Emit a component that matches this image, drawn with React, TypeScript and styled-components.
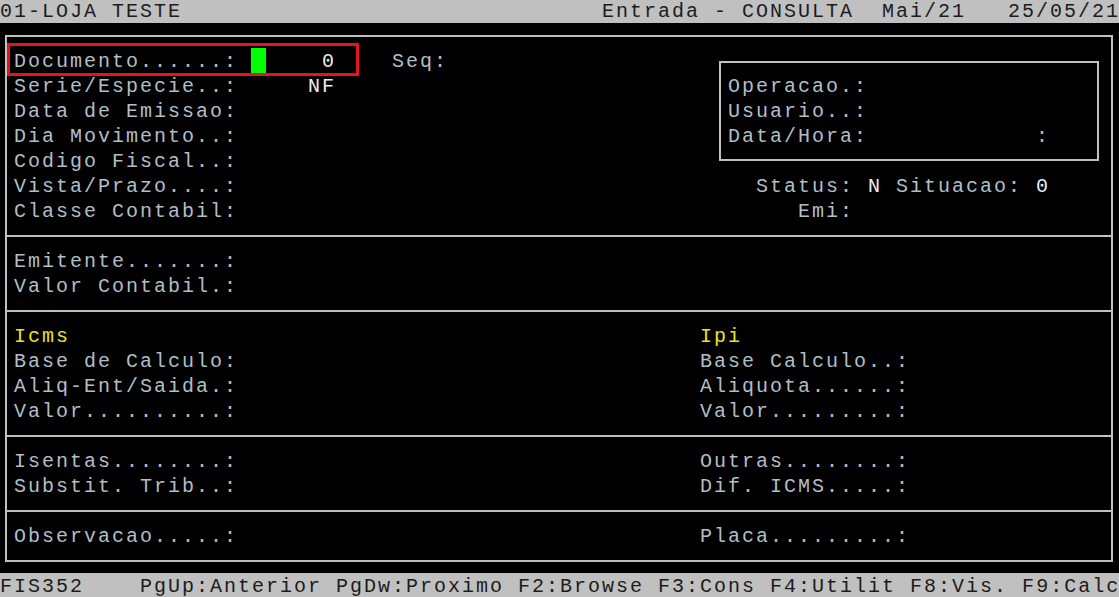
import React from "react";
import styled, { createGlobalStyle } from "styled-components";

const GlobalStyle = createGlobalStyle`
  html, body {
    margin: 0;
    padding: 0;
    background: #000;
    overflow: hidden;
  }
`;

const CELL_W = 14;
const CELL_H = 25;

const Screen = styled.div`
  position: relative;
  display: grid;
  grid-template-columns: repeat(80, ${CELL_W}px);
  grid-template-rows: repeat(24, ${CELL_H}px);
  width: ${CELL_W * 80}px;
  margin-top: -2px;
  background: #000;
  font-family: "Liberation Mono", "DejaVu Sans Mono", monospace;
  font-size: 20px;
  letter-spacing: 2px;
  line-height: ${CELL_H}px;
`;

const StatusBar = styled.div<{ $row: number }>`
  grid-column: 1 / 81;
  grid-row: ${(p) => p.$row + 1};
  background: #c0c0c0;
`;

type Tone = "label" | "value" | "title" | "bar";

const toneColor: Record<Tone, string> = {
  label: "#b2bec6",
  value: "#ececec",
  title: "#ece028",
  bar: "#1c1c1c",
};

const Text = styled.span<{ $col: number; $row: number; $len: number; $tone: Tone }>`
  grid-column: ${(p) => p.$col + 1} / span ${(p) => p.$len};
  grid-row: ${(p) => p.$row + 1};
  white-space: pre;
  padding-top: 1px;
  color: ${(p) => toneColor[p.$tone]};
  z-index: 1;
`;

const Frame = styled.div`
  grid-column: 1 / 81;
  grid-row: 2 / 24;
  margin: 12px 7px 11px 5px;
  border: 2px solid #c0c0c0;
`;

const Divider = styled.div<{ $row: number }>`
  grid-column: 1 / 81;
  grid-row: ${(p) => p.$row + 1};
  align-self: start;
  height: 2px;
  margin: 12px 7px 0 5px;
  background: #c0c0c0;
`;

const InfoBox = styled.div`
  grid-column: 52 / 80;
  grid-row: 3 / 8;
  margin: 13px 7px 12px 5px;
  border: 2px solid #c0c0c0;
`;

const Cursor = styled.div<{ $col: number; $row: number }>`
  grid-column: ${(p) => p.$col + 1};
  grid-row: ${(p) => p.$row + 1};
  margin-left: -1px;
  background: #00ff00;
`;

const Highlight = styled.div`
  position: absolute;
  left: 7px;
  top: 45px;
  width: 352px;
  height: 33px;
  box-sizing: border-box;
  border: 3px solid #e8141c;
  pointer-events: none;
  z-index: 2;
`;

type Item = [number, number, string, Tone];

const items: Item[] = [
  [0, 0, "01-LOJA TESTE", "bar"],
  [0, 43, "Entrada - CONSULTA  Mai/21   25/05/21", "bar"],

  [2, 1, "Documento......:", "label"],
  [2, 23, "0", "value"],
  [2, 28, "Seq:", "label"],
  [3, 1, "Serie/Especie..:", "label"],
  [3, 22, "NF", "value"],
  [3, 52, "Operacao.:", "label"],
  [4, 1, "Data de Emissao:", "label"],
  [4, 52, "Usuario..:", "label"],
  [5, 1, "Dia Movimento..:", "label"],
  [5, 52, "Data/Hora:", "label"],
  [5, 74, ":", "label"],
  [6, 1, "Codigo Fiscal..:", "label"],
  [7, 1, "Vista/Prazo....:", "label"],
  [7, 54, "Status:", "label"],
  [7, 62, "N", "value"],
  [7, 64, "Situacao:", "label"],
  [7, 74, "0", "value"],
  [8, 1, "Classe Contabil:", "label"],
  [8, 57, "Emi:", "label"],

  [10, 1, "Emitente.......:", "label"],
  [11, 1, "Valor Contabil.:", "label"],

  [13, 1, "Icms", "title"],
  [13, 50, "Ipi", "title"],
  [14, 1, "Base de Calculo:", "label"],
  [14, 50, "Base Calculo..:", "label"],
  [15, 1, "Aliq-Ent/Saida.:", "label"],
  [15, 50, "Aliquota......:", "label"],
  [16, 1, "Valor..........:", "label"],
  [16, 50, "Valor.........:", "label"],

  [18, 1, "Isentas........:", "label"],
  [18, 50, "Outras........:", "label"],
  [19, 1, "Substit. Trib..:", "label"],
  [19, 50, "Dif. ICMS.....:", "label"],

  [21, 1, "Observacao.....:", "label"],
  [21, 50, "Placa.........:", "label"],

  [23, 0, "FIS352", "bar"],
  [
    23,
    10,
    "PgUp:Anterior PgDw:Proximo F2:Browse F3:Cons F4:Utilit F8:Vis. F9:Calc",
    "bar",
  ],
];

const dividerRows = [9, 12, 17, 20];

export default function App() {
  return (
    <>
      <GlobalStyle />
      <Screen>
        <StatusBar $row={0} />
        <StatusBar $row={23} />
        <Frame />
        {dividerRows.map((r) => (
          <Divider key={r} $row={r} />
        ))}
        <InfoBox />
        <Cursor $col={18} $row={2} />
        {items.map(([row, col, text, tone], i) => (
          <Text key={i} $row={row} $col={col} $len={text.length} $tone={tone}>
            {text}
          </Text>
        ))}
        <Highlight />
      </Screen>
    </>
  );
}
